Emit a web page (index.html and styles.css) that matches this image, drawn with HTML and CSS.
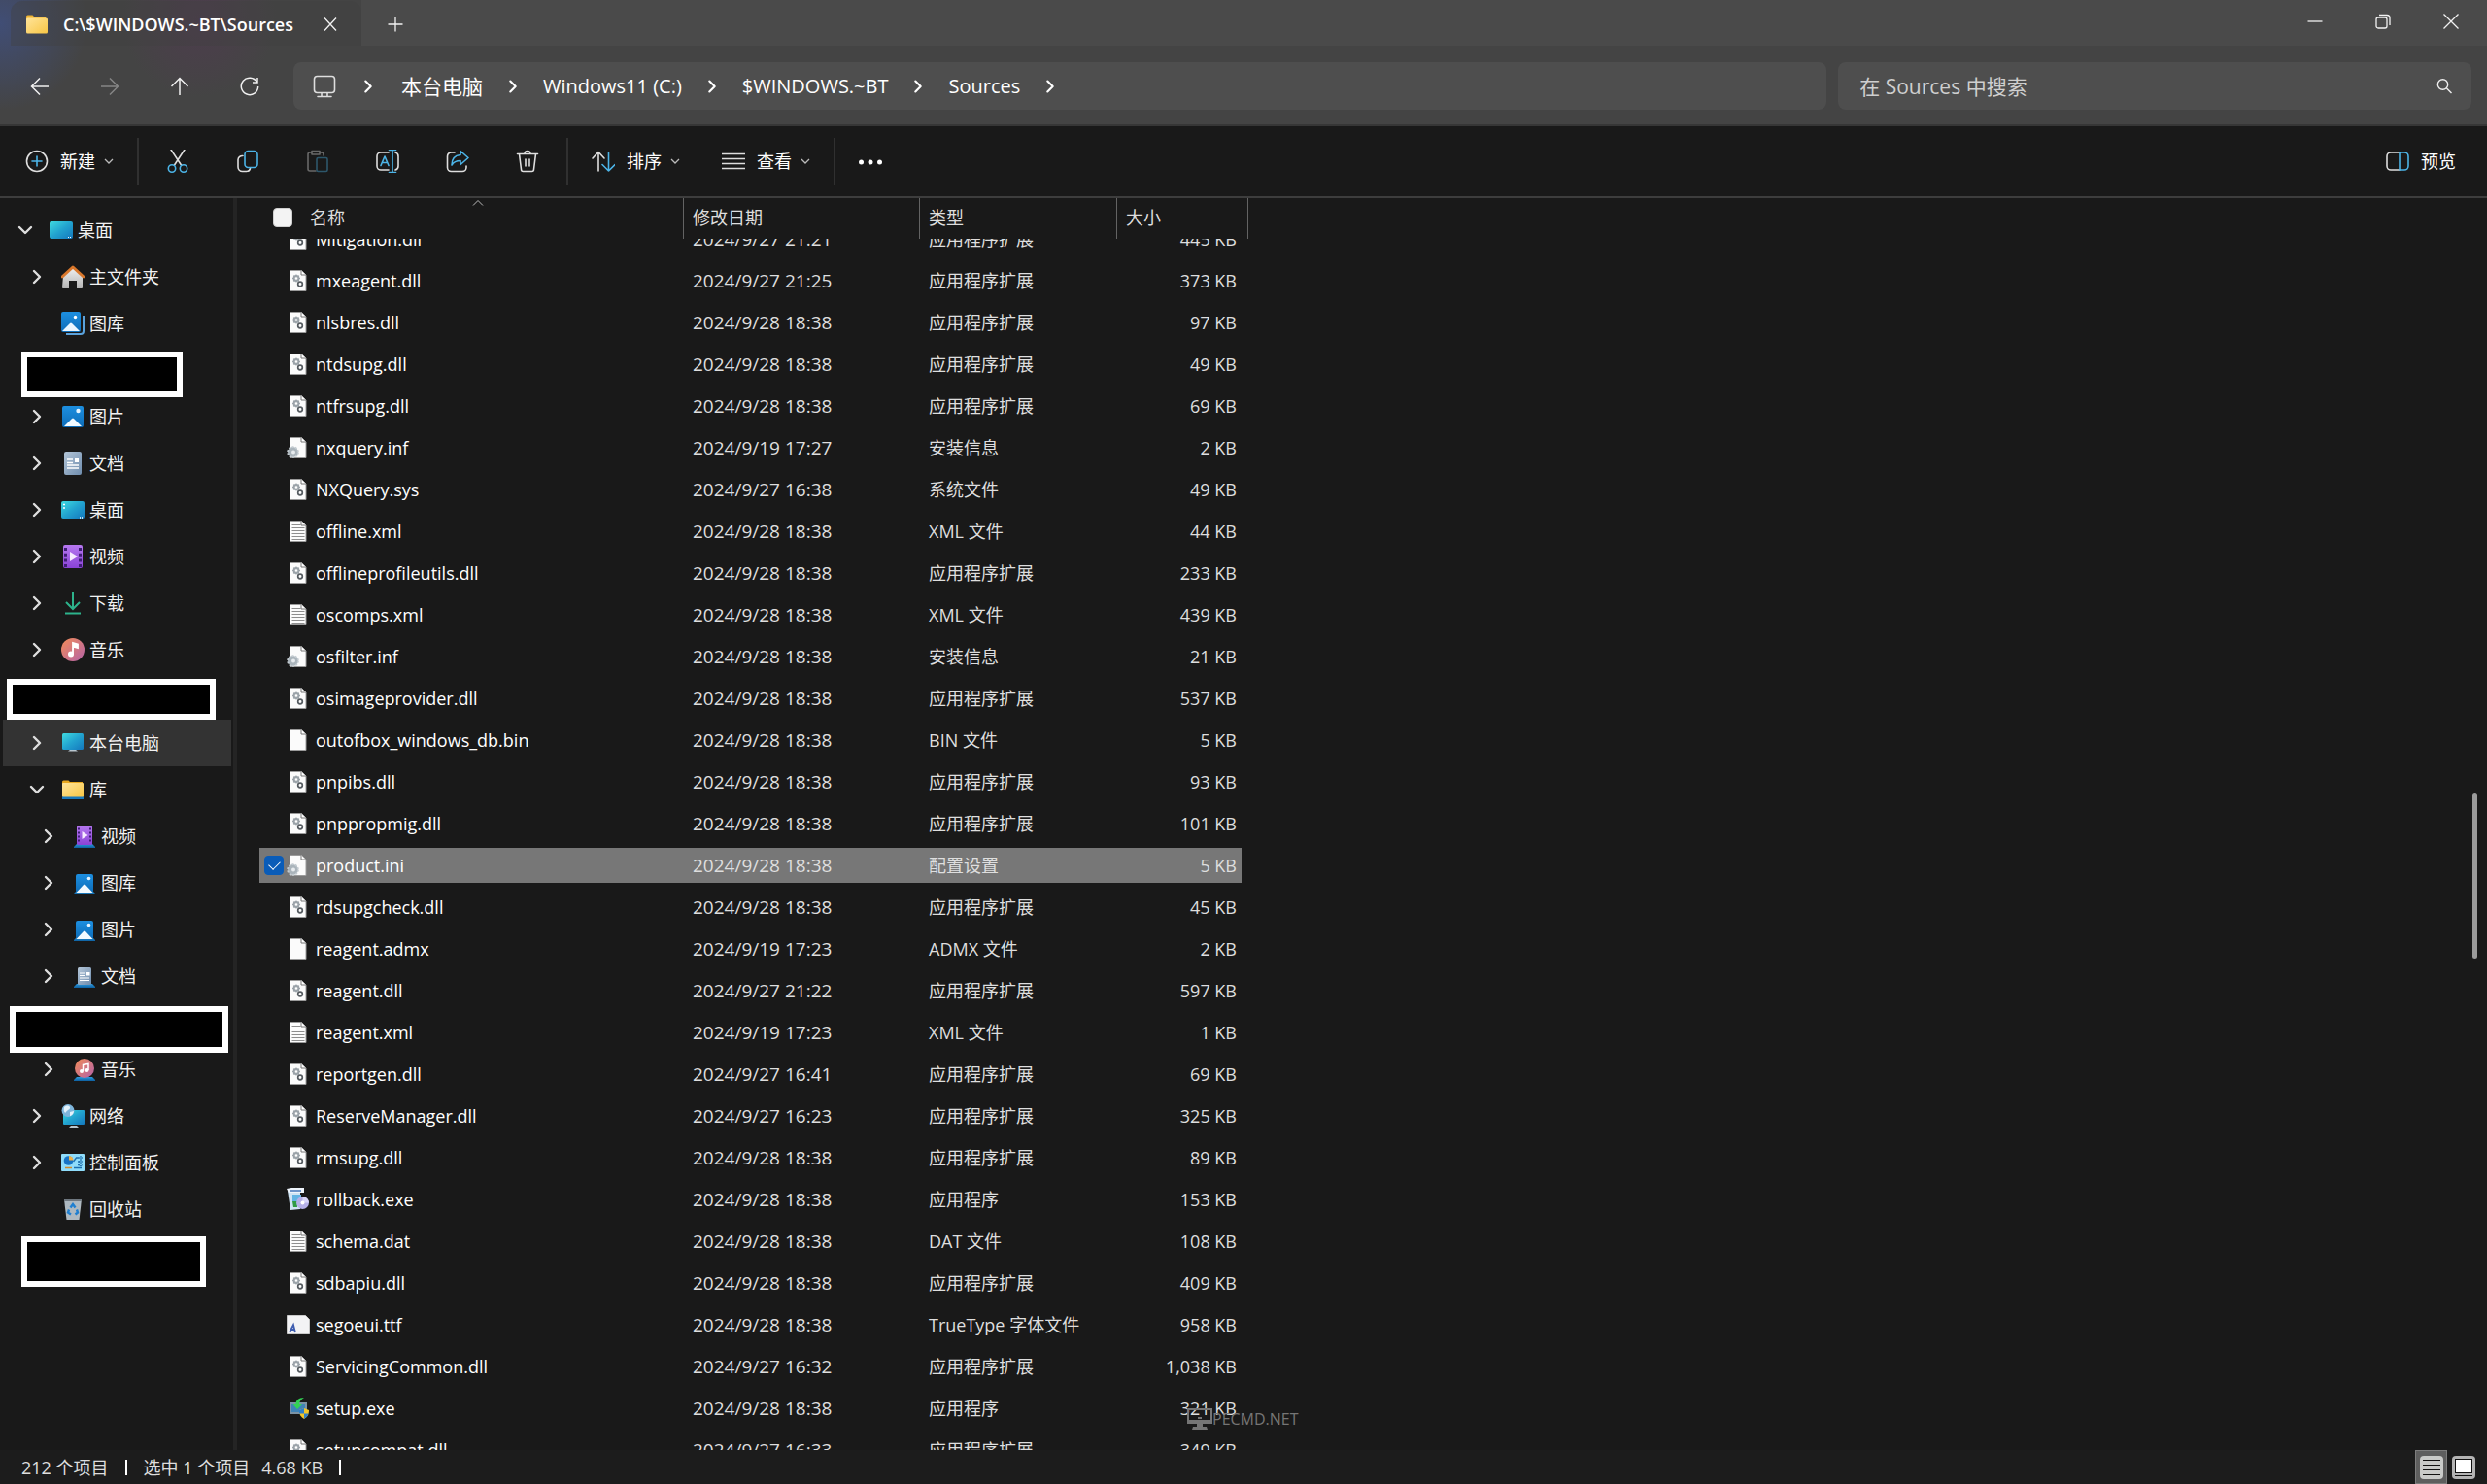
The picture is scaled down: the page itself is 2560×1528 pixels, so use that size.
FILE: index.html
```html
<!DOCTYPE html>
<html lang="zh-CN">
<head>
<meta charset="utf-8">
<title>C:\$WINDOWS.~BT\Sources</title>
<link rel="stylesheet" href="styles.css">
</head>
<body>
<svg class="sprite" aria-hidden="true">
  <defs>
    <linearGradient id="g-screen" x1="0" y1="0" x2="1" y2="1"><stop offset="0" stop-color="#3fdbe0"/><stop offset=".5" stop-color="#22a3cf"/><stop offset="1" stop-color="#1477bd"/></linearGradient>
    <linearGradient id="g-pic" x1="0" y1="0" x2="0" y2="1"><stop offset="0" stop-color="#1d8fe0"/><stop offset="1" stop-color="#0d6cb8"/></linearGradient>
    <linearGradient id="g-fold" x1="0" y1="0" x2="1" y2="1"><stop offset="0" stop-color="#ffe49a"/><stop offset="1" stop-color="#f8c645"/></linearGradient>
    <linearGradient id="g-doc" x1="0" y1="0" x2="1" y2="1"><stop offset="0" stop-color="#b4c6d8"/><stop offset="1" stop-color="#6f8dae"/></linearGradient>
    <linearGradient id="g-vid" x1="0" y1="0" x2="0" y2="1"><stop offset="0" stop-color="#b678f0"/><stop offset="1" stop-color="#8a43d6"/></linearGradient>
    <linearGradient id="g-mus" x1="0" y1="0" x2="1" y2="1"><stop offset="0" stop-color="#f28c58"/><stop offset="1" stop-color="#b462a8"/></linearGradient>
    <linearGradient id="g-house" x1="0" y1="0" x2="0" y2="1"><stop offset="0" stop-color="#f2f2f2"/><stop offset="1" stop-color="#b4b4b4"/></linearGradient>
    <linearGradient id="g-base" x1="0" y1="0" x2="0" y2="1"><stop offset="0" stop-color="#2c9be0"/><stop offset="1" stop-color="#0d5f9f"/></linearGradient>
  </defs>
  <symbol id="right" viewBox="0 0 20 20"><path d="M7 4l6 6-6 6" fill="none" stroke="currentColor" stroke-width="2.4" stroke-linecap="round" stroke-linejoin="round"/></symbol>
  <symbol id="down" viewBox="0 0 20 20"><path d="M4 7l6 6 6-6" fill="none" stroke="currentColor" stroke-width="2.4" stroke-linecap="round" stroke-linejoin="round"/></symbol>
  <symbol id="desk" viewBox="0 0 24 24"><rect x="0" y="3" width="24" height="18" rx="2" fill="url(#g-screen)"/><path d="M19 19.500h1M21 19.500h1" stroke="#fff"/></symbol>
  <symbol id="desk2" viewBox="0 0 24 24"><rect x="0" y="3" width="24" height="18" rx="2" fill="url(#g-screen)"/><path d="M2 6.500h2M2 10h2M19 20h1M21 20h1" stroke="#fff" stroke-width="1.500"/></symbol>
  <symbol id="home" viewBox="0 0 24 24"><path d="M2 11L12 2l10 9v12a1 1 0 0 1-1 1h-5v-8H8v8H2a1 1 0 0 1-1-1z" fill="url(#g-house)"/><path d="M1 12L12 2l11 10" fill="none" stroke="#d9772b" stroke-width="3" stroke-linecap="round" stroke-linejoin="round"/></symbol>
  <symbol id="gallery" viewBox="0 0 24 24"><path d="M5 23h15a3 3 0 0 0 3-3V4" fill="none" stroke="#5aa2dc" stroke-width="2"/><rect width="20" height="21" rx="2" fill="url(#g-pic)"/><path d="M1 20l8-8a1.500 1.500 0 0 1 2 0l8 8z" fill="#eaf6ff"/><circle cx="14.500" cy="5.500" r="1.700" fill="#fff"/></symbol>
  <symbol id="pic" viewBox="0 0 24 24"><rect x="1" y="1" width="22" height="22" rx="2" fill="url(#g-pic)"/><path d="M3 22l8-8a1.500 1.500 0 0 1 2 0l8 8z" fill="#f2faff"/><circle cx="17.500" cy="6" r="2.200" fill="#e6f5ff"/></symbol>
  <symbol id="doc" viewBox="0 0 24 24"><rect x="3" width="18" height="24" rx="2" fill="url(#g-doc)"/><path d="M6 8h6M6 11.500h6M6 14h12M6 17h12" stroke="#fff" stroke-width="1.400"/><rect x="14" y="7" width="4" height="4" fill="#fff"/></symbol>
  <symbol id="vid" viewBox="0 0 24 24"><rect x="2" width="20" height="24" rx="2" fill="url(#g-vid)"/><path d="M4.500 3v20M19.500 3v20" stroke="#3f1d75" stroke-width="3" stroke-dasharray="3 2.700"/><path d="M9 7l8 5-8 5z" fill="#f6eaff"/></symbol>
  <symbol id="dl" viewBox="0 0 24 24"><path d="M12 1v17M5 11l7 7 7-7M4 22.500h16" fill="none" stroke="#2db38c" stroke-width="2"/></symbol>
  <symbol id="mus" viewBox="0 0 24 24"><circle cx="12" cy="12" r="12" fill="url(#g-mus)"/><circle cx="10" cy="16.500" r="3" fill="#fff"/><path d="M12 16.500V5l5 1.500V10l-4-1" fill="#fff" stroke="#fff" stroke-width="1.800"/></symbol>
  <symbol id="pc" viewBox="0 0 24 24"><rect x="1" y="2" width="22" height="17" rx="1.500" fill="url(#g-screen)"/><path d="M7 20.500h10l-2-1.500H9z" fill="#b9c6cf"/></symbol>
  <symbol id="folder" viewBox="0 0 24 24"><path d="M1 4a1.500 1.500 0 0 1 1.500-1.500h5L10 5h11v6H1z" fill="#f0b432"/><rect x="1" y="5.500" width="22" height="16" rx="1.500" fill="url(#g-fold)"/></symbol>
  <symbol id="lib" viewBox="0 0 24 24"><path d="M1 4a1.500 1.500 0 0 1 1.500-1.500h5L9 4h13v6H1z" fill="#e9a81f"/><rect x="1" y="5" width="22" height="15" rx="1" fill="url(#g-fold)"/><rect x="1" y="19.500" width="22" height="2.500" fill="#1a79bd"/></symbol>
  <symbol id="base" viewBox="0 0 24 24"><path d="M4 20h16l3 3v1H1v-1z" fill="url(#g-base)"/></symbol>
  <symbol id="lvid" viewBox="0 0 24 24"><use href="#base"/><rect x="4" y="1" width="16" height="20" rx="1.500" fill="url(#g-vid)"/><path d="M6 3.500v16M18 3.500v16" stroke="#3f1d75" stroke-width="2" stroke-dasharray="2 2"/><path d="M9.500 7l6 4-6 4z" fill="#f6eaff"/></symbol>
  <symbol id="lpic" viewBox="0 0 24 24"><use href="#base"/><rect x="3" y="3" width="18" height="19" rx="2" fill="url(#g-pic)"/><path d="M3.500 22l7.500-8a1.500 1.500 0 0 1 2 0l7.500 8z" fill="#f2faff"/><circle cx="16.500" cy="7.500" r="1.800" fill="#e6f5ff"/></symbol>
  <symbol id="ldoc" viewBox="0 0 24 24"><use href="#base"/><rect x="5" y="3" width="14" height="18" rx="1.500" fill="url(#g-doc)"/><path d="M7 9h5M7 11.500h5M7 14h10M7 16.500h10" stroke="#fff" stroke-width="1.200"/><rect x="14" y="8" width="3.500" height="3.500" fill="#fff"/></symbol>
  <symbol id="lmus" viewBox="0 0 24 24"><use href="#base"/><circle cx="12" cy="11" r="10" fill="url(#g-mus)"/><circle cx="9" cy="14" r="2" fill="#fff"/><circle cx="14.500" cy="13" r="2" fill="#fff"/><path d="M10.500 14V7.500l5.500-1V13" fill="none" stroke="#fff" stroke-width="1.500"/></symbol>
  <symbol id="net" viewBox="0 0 24 24"><rect x="2" y="6" width="22" height="15" rx="1" fill="url(#g-screen)"/><path d="M8 24h10l-2-2h-6z" fill="#b9c6cf"/><circle cx="7" cy="6.500" r="6.500" fill="#7fb6dc"/><path d="M3 3c2-2 5-2 6 0s-3 3-4 5-3-1-2-5zM9 8l4-1c0 3-3 5-4 5z" fill="#e3f2fb"/></symbol>
  <symbol id="cpl" viewBox="0 0 24 24"><rect y="3" width="24" height="18" rx="1" fill="#8fdcfa"/><circle cx="7.500" cy="10" r="4.800" fill="#1673c5"/><path d="M8 9.500V5a4.800 4.800 0 0 1 4.500 4.500z" fill="#eeb14b"/><path d="M12.500 11l3-4H18M13 17.500h8" fill="none" stroke="#1d6fae" stroke-width="1.300"/><path d="M17 11h2M17 14.500h2" stroke="#1d6fae" stroke-width="1.300"/><circle cx="20" cy="7" r="1.300" fill="none" stroke="#1d6fae"/><circle cx="20" cy="11" r="1.300" fill="none" stroke="#1d6fae"/><circle cx="20" cy="14.500" r="1.300" fill="none" stroke="#1d6fae"/><path d="M4 17.500h7" stroke="#d08a2b" stroke-width="1.500"/></symbol>
  <symbol id="bin" viewBox="0 0 24 24"><path d="M3 2h18l-2.500 21h-13z" fill="#aeb9c1"/><path d="M3 2h18v2H3z" fill="#6f7880"/><path d="M9.500 10.500L12 7l2.500 3.500M16 12.500l1 3-2.500 2M8 12.500l-1 3 3 2" fill="none" stroke="#1f7fd0" stroke-width="2.400"/></symbol>
  <symbol id="page" viewBox="0 0 24 24"><path d="M3.500 1.500h12l4.500 4.500v16.500H3.500z" fill="#fbfbfb" stroke="#9a9a9a"/><path d="M15 1.500v4.500h5" fill="#fff" stroke="#777"/></symbol>
  <symbol id="dll" viewBox="0 0 24 24"><use href="#page"/><circle cx="10" cy="9.500" r="2.600" fill="none" stroke="#9ba3a9" stroke-width="1.800"/><path d="M10 5.500v8M6 9.500h8M7.200 6.700l5.600 5.600M12.800 6.700l-5.600 5.600" stroke="#9ba3a9" stroke-width="1.200"/><circle cx="10" cy="9.500" r="1.300" fill="#fff"/><circle cx="14" cy="15.500" r="2.300" fill="#fff" stroke="#555b60" stroke-width="1.700"/></symbol>
  <symbol id="txt" viewBox="0 0 24 24"><use href="#page"/><path d="M5.500 5.500h9M5.500 8.500h13M5.500 11.500h13M5.500 14.500h13M5.500 17.500h13M5.500 20.500h13" stroke="#8d8d8d"/></symbol>
  <symbol id="inf" viewBox="0 0 24 24"><use href="#page"/><circle cx="6.500" cy="16.500" r="5.400" fill="#aab4bb" stroke="#c3cbd1" stroke-width="1.800" stroke-dasharray="2 1.400"/><circle cx="7" cy="16.500" r="2" fill="#e7ebee"/></symbol>
  <symbol id="inst" viewBox="0 0 24 24"><path d="M1 3l3 20 10-1V5z" fill="#cfe4f4"/><path d="M0 1l5-1h13v5H2z" fill="#eef4fb"/><path d="M4 3h11" stroke="#6d94c9" stroke-width="2"/><path d="M6 7h9v7H6z" fill="#62b4e4"/><path d="M6 14h5v6H7z" fill="#2f9b45"/><circle cx="16.500" cy="15.500" r="6.500" fill="#b5b0e8"/><path d="M16.500 9a6.500 6.500 0 0 1 6.500 6.500h-6.500z" fill="#d9d6fa"/><circle cx="16.500" cy="15.500" r="2" fill="#fff"/></symbol>
  <symbol id="font" viewBox="0 0 24 24"><path d="M.5 2.500h19l4 4v15H.5z" fill="#f3f3f5" stroke="#c9c9c9"/><path d="M3 20l4-8 2 8M4.500 17h4" fill="none" stroke="#3e5db0" stroke-width="1.800"/></symbol>
  <symbol id="setup" viewBox="0 0 24 24"><rect x="3" y="6" width="18" height="12" fill="#7b93a6"/><rect x="5" y="8" width="14" height="8" fill="#3f84b8"/><path d="M18 1c-6 0-8.500 3-8.500 7H6.500l4.500 5 5-5h-3c0-3 2-5 5-7z" fill="#33d354"/><path d="M13 14l5-2 5 2c0 5-2 7-5 9-3-2-5-4-5-9z" fill="#f1c72b"/><path d="M13 14l5-2v5.500h-5zM18 17.500h4.500c-.5 2.500-2.500 4-4.500 5.500z" fill="#2f7fc9"/></symbol>
</svg>

<header class="chrome">
  <div class="titlebar">
    <div class="tab">
      <svg class="i24"><use href="#folder"/></svg>
      <span class="tab-title">C:\$WINDOWS.~BT\Sources</span>
      <button class="tab-close" aria-label="关闭标签页"><svg viewBox="0 0 16 16"><path d="M2 1.500l12 13M14 1.500l-12 13"/></svg></button>
    </div>
    <button class="tab-new" aria-label="新建标签页"><svg viewBox="0 0 16 16"><path d="M8 .5v15M.5 8h15"/></svg></button>
    <div class="win">
      <button aria-label="最小化"><svg viewBox="0 0 16 16"><path d="M.5 8h15"/></svg></button>
      <button aria-label="还原"><svg viewBox="0 0 16 16"><rect x="1" y="4" width="11" height="11" rx="2"/><path d="M4 1.500h8a3 3 0 0 1 3 3V12"/></svg></button>
      <button aria-label="关闭"><svg viewBox="0 0 16 16"><path d="M.5 .5l15 15M15.500 .5l-15 15"/></svg></button>
    </div>
  </div>
  <div class="navbar">
    <div class="navbtns">
      <button aria-label="后退"><svg viewBox="0 0 20 20"><path d="M19 10H2M10 1.500L1.500 10l8.500 8.500"/></svg></button>
      <button aria-label="前进" disabled><svg viewBox="0 0 20 20"><path d="M1 10h17M10 1.500l8.500 8.500-8.500 8.500"/></svg></button>
      <button aria-label="向上"><svg viewBox="0 0 20 20"><path d="M10 19V2M1.500 10L10 1.500l8.500 8.500"/></svg></button>
      <button aria-label="刷新"><svg viewBox="0 0 20 20"><path d="M17.500 5.500A8.700 8.700 0 1 0 18.700 10M18 1v5h-5"/></svg></button>
    </div>
    <nav class="address" aria-label="地址">
      <svg class="i24 line" viewBox="0 0 24 24"><rect x="1.500" y="1.500" width="21" height="17" rx="3"/><path d="M9 19v3M15 19v3M5 22.500h14"/></svg>
      <svg class="sep"><use href="#right"/></svg><a class="cjk" href="#">本台电脑</a>
      <svg class="sep"><use href="#right"/></svg><a href="#">Windows11 (C:)</a>
      <svg class="sep"><use href="#right"/></svg><a href="#">$WINDOWS.~BT</a>
      <svg class="sep"><use href="#right"/></svg><a href="#">Sources</a>
      <svg class="sep"><use href="#right"/></svg>
    </nav>
    <label class="search">
      <input type="text" aria-label="搜索" placeholder="在 Sources 中搜索">
      <svg viewBox="0 0 16 16"><circle cx="6.500" cy="6" r="5.200"/><path d="M10.500 10l5 5"/></svg>
    </label>
  </div>
</header>

<div class="toolbar">
  <button class="tool"><svg class="i24 line" viewBox="0 0 24 24"><circle cx="12" cy="12" r="10.500"/><path class="blue" d="M12 7v10M7 12h10"/></svg>新建<svg class="drop" viewBox="0 0 10 10"><path d="M1 3l4 4 4-4"/></svg></button>
  <span class="rule"></span>
  <div class="icons">
    <button aria-label="剪切"><svg class="i24 line" viewBox="0 0 24 24"><path d="M5 0l10.500 16M19 0L8.500 16"/><circle class="blue" cx="6" cy="19.500" r="3.700"/><circle class="blue" cx="18" cy="19.500" r="3.700"/></svg></button>
    <button aria-label="复制"><svg class="i24 line" viewBox="0 0 24 24"><path d="M7 6.500a4.500 4.500 0 0 0-5 4V18a4.500 4.500 0 0 0 4.500 4.500h4a4 4 0 0 0 4-3"/><rect class="blue" x="9" y="1.500" width="13" height="17" rx="3.500"/></svg></button>
    <button aria-label="粘贴" disabled><svg class="i24 line" viewBox="0 0 24 24"><path d="M6 3H4a2 2 0 0 0-2 2v15a2 2 0 0 0 2 2h6M14 3h2a2 2 0 0 1 2 2v1M6 1.500h8V5H6z"/><rect class="blue" x="11" y="8.500" width="11" height="14" rx="1.500"/></svg></button>
    <button aria-label="重命名"><svg class="i24 line" viewBox="0 0 24 24"><path d="M13 3H5a4 4 0 0 0-4 4v10a4 4 0 0 0 4 4h8M20 3a4 4 0 0 1 3 4v10a4 4 0 0 1-3 4"/><path class="blue" d="M13.500.5h7M13.500 23.500h7M17 .5v23M5 16.500L9 7l4 9.500M6.500 13.500h5"/></svg></button>
    <button aria-label="共享"><svg class="i24 line" viewBox="0 0 24 24"><path d="M9 3H5.500A4 4 0 0 0 1.500 7v11.500a4 4 0 0 0 4 4H17a4 4 0 0 0 4-4V17"/><path class="blue" d="M15 1.500L23 8.500l-8 7v-4c-4 0-7 1-9 4.500 0-6 3-10 9-10.500z"/></svg></button>
    <button aria-label="删除"><svg class="i24 line" viewBox="0 0 24 24"><path d="M1.500 4.500h21M9 4.500a3 3 0 0 1 6 0M3.500 4.500l2 16a2 2 0 0 0 2 2h9a2 2 0 0 0 2-2l2-16M10 10v7M14 10v7"/></svg></button>
  </div>
  <span class="rule"></span>
  <button class="tool"><svg class="i24 line" viewBox="0 0 24 24"><path d="M7 22V3M1 9l6-6.500L13 9"/><path class="blue" d="M17.500 3v19M11 15.500l6.500 6.500 6.500-6.500"/></svg>排序<svg class="drop" viewBox="0 0 10 10"><path d="M1 3l4 4 4-4"/></svg></button>
  <button class="tool view"><svg class="i24 line" viewBox="0 0 24 24"><path d="M0 4.500h24M0 9.500h24M0 14.500h24M0 19.500h24"/></svg>查看<svg class="drop" viewBox="0 0 10 10"><path d="M1 3l4 4 4-4"/></svg></button>
  <span class="rule"></span>
  <button class="more" aria-label="更多"><svg class="i24" viewBox="0 0 24 24"><circle cx="2.500" cy="13" r="2.500"/><circle cx="12" cy="13" r="2.500"/><circle cx="21.500" cy="13" r="2.500"/></svg></button>
  <button class="tool preview"><svg class="i24 line" viewBox="0 0 24 24"><path d="M14 3H5a4 4 0 0 0-4 4v10a4 4 0 0 0 4 4h9"/><path class="blue" d="M14 3h5a4 4 0 0 1 4 4v10a4 4 0 0 1-4 4h-5z"/></svg>预览</button>
</div>

<main class="body">
  <nav class="tree" aria-label="导航窗格">
    <ul>
      <li><svg class="exp"><use href="#down"/></svg><svg class="i24"><use href="#desk"/></svg><a href="#">桌面</a></li>
      <li class="l1"><svg class="exp"><use href="#right"/></svg><svg class="i24"><use href="#home"/></svg><a href="#">主文件夹</a></li>
      <li class="l1"><svg class="exp"></svg><svg class="i24"><use href="#gallery"/></svg><a href="#">图库</a></li>
      <li class="masked"><span class="mask m1"></span></li>
      <li class="l1"><svg class="exp"><use href="#right"/></svg><svg class="i24"><use href="#pic"/></svg><a href="#">图片</a></li>
      <li class="l1"><svg class="exp"><use href="#right"/></svg><svg class="i24"><use href="#doc"/></svg><a href="#">文档</a></li>
      <li class="l1"><svg class="exp"><use href="#right"/></svg><svg class="i24"><use href="#desk2"/></svg><a href="#">桌面</a></li>
      <li class="l1"><svg class="exp"><use href="#right"/></svg><svg class="i24"><use href="#vid"/></svg><a href="#">视频</a></li>
      <li class="l1"><svg class="exp"><use href="#right"/></svg><svg class="i24"><use href="#dl"/></svg><a href="#">下载</a></li>
      <li class="l1"><svg class="exp"><use href="#right"/></svg><svg class="i24"><use href="#mus"/></svg><a href="#">音乐</a></li>
      <li class="masked"><span class="mask m2"></span></li>
      <li class="l1 current"><svg class="exp"><use href="#right"/></svg><svg class="i24"><use href="#pc"/></svg><a href="#">本台电脑</a></li>
      <li class="l1"><svg class="exp"><use href="#down"/></svg><svg class="i24"><use href="#lib"/></svg><a href="#">库</a></li>
      <li class="l2"><svg class="exp"><use href="#right"/></svg><svg class="i24"><use href="#lvid"/></svg><a href="#">视频</a></li>
      <li class="l2"><svg class="exp"><use href="#right"/></svg><svg class="i24"><use href="#lpic"/></svg><a href="#">图库</a></li>
      <li class="l2"><svg class="exp"><use href="#right"/></svg><svg class="i24"><use href="#lpic"/></svg><a href="#">图片</a></li>
      <li class="l2"><svg class="exp"><use href="#right"/></svg><svg class="i24"><use href="#ldoc"/></svg><a href="#">文档</a></li>
      <li class="masked"><span class="mask m3"></span></li>
      <li class="l2"><svg class="exp"><use href="#right"/></svg><svg class="i24"><use href="#lmus"/></svg><a href="#">音乐</a></li>
      <li class="l1"><svg class="exp"><use href="#right"/></svg><svg class="i24"><use href="#net"/></svg><a href="#">网络</a></li>
      <li class="l1"><svg class="exp"><use href="#right"/></svg><svg class="i24"><use href="#cpl"/></svg><a href="#">控制面板</a></li>
      <li class="l1"><svg class="exp"></svg><svg class="i24"><use href="#bin"/></svg><a href="#">回收站</a></li>
      <li class="masked"><span class="mask m4"></span></li>
    </ul>
  </nav>

  <section class="files">
    <table>
      <thead>
        <tr>
          <th class="name"><input type="checkbox" class="check" aria-label="全选">名称<svg class="sort" viewBox="0 0 12 6"><path d="M1 5.500l5-5 5 5"/></svg></th>
          <th>修改日期</th><th>类型</th><th>大小</th>
        </tr>
      </thead>
      <tbody>
        <tr><td><svg class="i24"><use href="#dll"/></svg>Mitigation.dll</td><td>2024/9/27 21:21</td><td>应用程序扩展</td><td>445 KB</td></tr>
        <tr><td><svg class="i24"><use href="#dll"/></svg>mxeagent.dll</td><td>2024/9/27 21:25</td><td>应用程序扩展</td><td>373 KB</td></tr>
        <tr><td><svg class="i24"><use href="#dll"/></svg>nlsbres.dll</td><td>2024/9/28 18:38</td><td>应用程序扩展</td><td>97 KB</td></tr>
        <tr><td><svg class="i24"><use href="#dll"/></svg>ntdsupg.dll</td><td>2024/9/28 18:38</td><td>应用程序扩展</td><td>49 KB</td></tr>
        <tr><td><svg class="i24"><use href="#dll"/></svg>ntfrsupg.dll</td><td>2024/9/28 18:38</td><td>应用程序扩展</td><td>69 KB</td></tr>
        <tr><td><svg class="i24"><use href="#inf"/></svg>nxquery.inf</td><td>2024/9/19 17:27</td><td>安装信息</td><td>2 KB</td></tr>
        <tr><td><svg class="i24"><use href="#dll"/></svg>NXQuery.sys</td><td>2024/9/27 16:38</td><td>系统文件</td><td>49 KB</td></tr>
        <tr><td><svg class="i24"><use href="#txt"/></svg>offline.xml</td><td>2024/9/28 18:38</td><td>XML 文件</td><td>44 KB</td></tr>
        <tr><td><svg class="i24"><use href="#dll"/></svg>offlineprofileutils.dll</td><td>2024/9/28 18:38</td><td>应用程序扩展</td><td>233 KB</td></tr>
        <tr><td><svg class="i24"><use href="#txt"/></svg>oscomps.xml</td><td>2024/9/28 18:38</td><td>XML 文件</td><td>439 KB</td></tr>
        <tr><td><svg class="i24"><use href="#inf"/></svg>osfilter.inf</td><td>2024/9/28 18:38</td><td>安装信息</td><td>21 KB</td></tr>
        <tr><td><svg class="i24"><use href="#dll"/></svg>osimageprovider.dll</td><td>2024/9/28 18:38</td><td>应用程序扩展</td><td>537 KB</td></tr>
        <tr><td><svg class="i24"><use href="#page"/></svg>outofbox_windows_db.bin</td><td>2024/9/28 18:38</td><td>BIN 文件</td><td>5 KB</td></tr>
        <tr><td><svg class="i24"><use href="#dll"/></svg>pnpibs.dll</td><td>2024/9/28 18:38</td><td>应用程序扩展</td><td>93 KB</td></tr>
        <tr><td><svg class="i24"><use href="#dll"/></svg>pnppropmig.dll</td><td>2024/9/28 18:38</td><td>应用程序扩展</td><td>101 KB</td></tr>
        <tr class="selected"><td><input type="checkbox" class="check" checked aria-label="product.ini"><svg class="i24"><use href="#inf"/></svg>product.ini</td><td>2024/9/28 18:38</td><td>配置设置</td><td>5 KB</td></tr>
        <tr><td><svg class="i24"><use href="#dll"/></svg>rdsupgcheck.dll</td><td>2024/9/28 18:38</td><td>应用程序扩展</td><td>45 KB</td></tr>
        <tr><td><svg class="i24"><use href="#page"/></svg>reagent.admx</td><td>2024/9/19 17:23</td><td>ADMX 文件</td><td>2 KB</td></tr>
        <tr><td><svg class="i24"><use href="#dll"/></svg>reagent.dll</td><td>2024/9/27 21:22</td><td>应用程序扩展</td><td>597 KB</td></tr>
        <tr><td><svg class="i24"><use href="#txt"/></svg>reagent.xml</td><td>2024/9/19 17:23</td><td>XML 文件</td><td>1 KB</td></tr>
        <tr><td><svg class="i24"><use href="#dll"/></svg>reportgen.dll</td><td>2024/9/27 16:41</td><td>应用程序扩展</td><td>69 KB</td></tr>
        <tr><td><svg class="i24"><use href="#dll"/></svg>ReserveManager.dll</td><td>2024/9/27 16:23</td><td>应用程序扩展</td><td>325 KB</td></tr>
        <tr><td><svg class="i24"><use href="#dll"/></svg>rmsupg.dll</td><td>2024/9/28 18:38</td><td>应用程序扩展</td><td>89 KB</td></tr>
        <tr><td><svg class="i24"><use href="#inst"/></svg>rollback.exe</td><td>2024/9/28 18:38</td><td>应用程序</td><td>153 KB</td></tr>
        <tr><td><svg class="i24"><use href="#txt"/></svg>schema.dat</td><td>2024/9/28 18:38</td><td>DAT 文件</td><td>108 KB</td></tr>
        <tr><td><svg class="i24"><use href="#dll"/></svg>sdbapiu.dll</td><td>2024/9/28 18:38</td><td>应用程序扩展</td><td>409 KB</td></tr>
        <tr><td><svg class="i24"><use href="#font"/></svg>segoeui.ttf</td><td>2024/9/28 18:38</td><td>TrueType 字体文件</td><td>958 KB</td></tr>
        <tr><td><svg class="i24"><use href="#dll"/></svg>ServicingCommon.dll</td><td>2024/9/27 16:32</td><td>应用程序扩展</td><td>1,038 KB</td></tr>
        <tr><td><svg class="i24"><use href="#setup"/></svg>setup.exe</td><td>2024/9/28 18:38</td><td>应用程序</td><td>321 KB</td></tr>
        <tr><td><svg class="i24"><use href="#dll"/></svg>setupcompat.dll</td><td>2024/9/27 16:33</td><td>应用程序扩展</td><td>349 KB</td></tr>
      </tbody>
    </table>
    <div class="watermark"><svg viewBox="0 0 26 22"><path d="M1 1h24v14H1zM1 13h24M11 10h4" fill="none" stroke="#757575" stroke-width="2"/><path d="M10 16h6v3h4l1 3H5l1-3h4z" fill="#757575"/></svg>PECMD.NET</div>
    <span class="scroll"></span>
  </section>
</main>

<footer class="status">
  <span>212 个项目</span><i></i><span>选中 1 个项目</span><span class="size">4.68 KB</span><i></i>
  <div class="views">
    <button class="on" aria-label="详细信息"><svg class="i24" viewBox="0 0 24 24"><rect width="24" height="24" rx="4" fill="#c9cac8"/><path d="M3 4.500h18M3 9.500h18M3 14.500h18M3 19.500h18" stroke="#111"/></svg></button>
    <button aria-label="大图标"><svg class="i24" viewBox="0 0 24 24"><rect width="24" height="24" rx="4" fill="#b4b4b4"/><rect x="3.500" y="3.500" width="17" height="14" fill="#fff" stroke="#111"/><path d="M3 20.500h18" stroke="#111"/></svg></button>
  </div>
</footer>
</body>
</html>
```
FILE: styles.css
```css
* { box-sizing: border-box; }

body {
  margin: 0;
  height: 100vh;
  display: flex;
  flex-direction: column;
  background: #191919;
  color: #fff;
  font: 18px/24px "Open Sans", "Noto Sans CJK SC", sans-serif;
  overflow: hidden;
}

button {
  display: flex;
  align-items: center;
  justify-content: center;
  padding: 0;
  border: 0;
  background: none;
  color: inherit;
  font: inherit;
}

a { color: inherit; text-decoration: none; }
svg { flex: none; }
.sprite { position: absolute; width: 0; height: 0; }
.i24 { width: 24px; height: 24px; }
.line { fill: none; stroke: #dedede; stroke-width: 1.6; stroke-linecap: round; stroke-linejoin: round; }
.line .blue { stroke: #4cb4e7; }

/* Title bar and navigation */
.chrome {
  flex: none;
  background:
    radial-gradient(circle at 0 24px, rgba(62, 84, 150, .6), transparent 90px),
    radial-gradient(circle at 205px 20px, rgba(90, 50, 90, .4), transparent 80px),
    #444;
  border-bottom: 2px solid #363636;
}

.titlebar {
  display: flex;
  height: 47px;
  background: linear-gradient(90deg, transparent 11px, transparent 372px, #4a4a4a 372px);
}

.tab {
  display: flex;
  align-items: center;
  gap: 15px;
  width: 361px;
  margin: 1px 0 0 11px;
  padding: 2px 16px 0 15px;
  border-radius: 12px 12px 0 0;
  background: rgba(66, 66, 66, .4);
}

.tab-title { flex: 1; font-weight: 600; white-space: nowrap; }
.tab-close, .tab-new { width: 32px; height: 44px; }
.tab-new { margin: 3px 0 0 19px; }
.titlebar button svg { width: 16px; height: 16px; fill: none; stroke: #f2f2f2; stroke-width: 1.3; }
.win { display: flex; margin: 0 2px 0 auto; }
.win button { width: 70px; height: 43px; }

.navbar {
  display: flex;
  align-items: center;
  height: 81px;
  padding: 2px 16px 0 17px;
}

.navbtns { display: flex; gap: 24px; margin-right: 21px; }
.navbtns button { width: 48px; height: 48px; }
.navbtns svg { width: 20px; height: 20px; fill: none; stroke: #f0f0f0; stroke-width: 1.5; }
.navbtns button:disabled svg { stroke: #858585; }

.address {
  flex: 23 1 0;
  display: flex;
  align-items: center;
  height: 49px;
  padding-left: 20px;
  border-radius: 8px;
  background: #4e4e4e;
  font-size: 20px;
  line-height: 28px;
  white-space: nowrap;
}

.address .cjk { font-size: 21px; }
.address .sep { width: 18px; height: 18px; margin: 0 22px; }
.address .i24 + .sep { margin-left: 24px; margin-right: 25px; }

.search {
  flex: 9 1 0;
  display: flex;
  align-items: center;
  height: 49px;
  margin-left: 12px;
  padding: 0 20px 0 22px;
  border-radius: 8px;
  background: #4e4e4e;
}

.search input {
  flex: 1;
  min-width: 0;
  padding: 0;
  border: 0;
  background: none;
  color: #fff;
  font: inherit;
  font-size: 21px;
  outline: none;
}

.search input::placeholder { color: #cfcfcf; opacity: 1; }
.search svg { width: 16px; height: 16px; fill: none; stroke: #eee; stroke-width: 1.4; }

/* Command bar */
.toolbar {
  flex: none;
  display: flex;
  align-items: center;
  height: 74px;
  padding: 0 32px 0 26px;
  border-bottom: 2px solid #3d3d3d;
}

.tool { gap: 12px; }
.tool .drop { width: 10px; height: 10px; margin-left: -3px; fill: none; stroke: #bbb; stroke-width: 1.3; }
.rule { width: 2px; height: 48px; margin: 0 24px; background: #303030; }
.icons { display: flex; gap: 24px; margin: 0 -8px; }
.icons button { width: 48px; height: 48px; }
.icons button:disabled { opacity: .4; }
.view { margin-left: 43px; }
.more { fill: #fff; }
.preview { margin-left: auto; }

/* Navigation pane */
.body { flex: 1; min-height: 0; display: flex; }

.tree {
  flex: none;
  width: 244px;
  padding-top: 9px;
  border-right: 4px solid #242424;
  overflow: hidden;
}

.tree ul { margin: 0; padding: 0 2px 0 3px; list-style: none; }
.tree li { display: flex; align-items: center; height: 48px; padding-left: 13px; color: #f2f2f2; }
.tree .l1 { padding-left: 25px; }
.tree .l2 { padding-left: 37px; }
.tree .current { background: #333; }
.tree .exp { width: 20px; height: 20px; margin-right: 15px; color: #dedede; }
.tree .i24 { margin-right: 5px; }
.tree .masked { align-items: flex-start; padding-left: 0; }
.mask { flex: none; border: 6px solid #fff; background: #000; }
.m1 { width: 166px; height: 47px; margin: 5px 0 0 19px; }
.m2 { width: 215px; height: 42px; margin: 6px 0 0 4px; }
.m3 { width: 225px; height: 48px; margin: 7px 0 0 7px; }
.m4 { width: 190px; height: 52px; margin: 4px 0 0 19px; }

/* File list */
.files { position: relative; flex: 1; min-width: 0; overflow: hidden; }

table { display: flex; flex-direction: column; height: 100%; width: 1041px; }
thead { display: block; flex: none; }
tbody { display: block; flex: 1; min-height: 0; overflow: hidden; }
tr { display: grid; grid-template-columns: 460px 243px 203px 135px; align-items: center; }

th {
  display: flex;
  align-items: center;
  height: 42px;
  padding: 0 0 2px 9px;
  border-right: 1px solid #636363;
  color: #dedede;
  font-weight: 400;
  white-space: nowrap;
}

th.name { position: relative; padding-left: 37px; gap: 18px; }
.sort { position: absolute; left: 242px; top: 2px; width: 12px; height: 6px; fill: none; stroke: #bbb; }

.check {
  appearance: none;
  flex: none;
  width: 20px;
  height: 20px;
  margin: 0;
  border: 1px solid #cfcfcf;
  border-radius: 4px;
  background: #f3f3f3;
}

.check:checked {
  border-color: #0a5cb8;
  background: #0a5cb8;
  display: grid;
  place-items: center;
}

.check:checked::after {
  content: "";
  width: 10px;
  height: 6px;
  margin-top: -3px;
  border: solid #fff;
  border-width: 0 0 1px 1px;
  transform: rotate(-45deg);
}

tbody tr { height: 43px; }
tbody tr:first-child { margin-top: -22px; }
td { display: flex; align-items: center; height: 36px; padding: 0 0 0 9px; color: #dedede; white-space: nowrap; }
td:first-child { gap: 6px; padding-left: 51px; color: #fff; }
td:nth-child(2) { font-size: 19px; }
td:last-child { justify-content: flex-end; padding-right: 12px; }

.selected td { background: #777; }
.selected td:first-child { margin-left: 23px; gap: 3px; padding-left: 5px; }
.selected td:first-child .i24 { margin-right: 3px; }
.selected td:last-child { margin-right: 7px; padding-right: 5px; }

.watermark {
  position: absolute;
  left: 978px;
  bottom: 20px;
  display: flex;
  align-items: center;
  color: #757575;
  font-size: 16px;
}

.watermark svg { width: 26px; height: 22px; }

.scroll {
  position: absolute;
  right: 10px;
  top: 613px;
  width: 5px;
  height: 170px;
  border-radius: 3px;
  background: #9a9a9a;
}

/* Status bar */
.status {
  flex: none;
  display: flex;
  align-items: center;
  height: 35px;
  padding: 0 12px 0 22px;
  background: #1c1c1c;
  color: #dedede;
}

.status i { width: 2px; height: 16px; margin: 0 17px; background: #fff; }
.size { margin-left: 12px; }
.views { display: flex; margin-left: auto; gap: 5px; }
.views button { height: 35px; }
.views .on { width: 33px; border: 1px solid #7d7d7d; background: #5e5e5e; }
```
